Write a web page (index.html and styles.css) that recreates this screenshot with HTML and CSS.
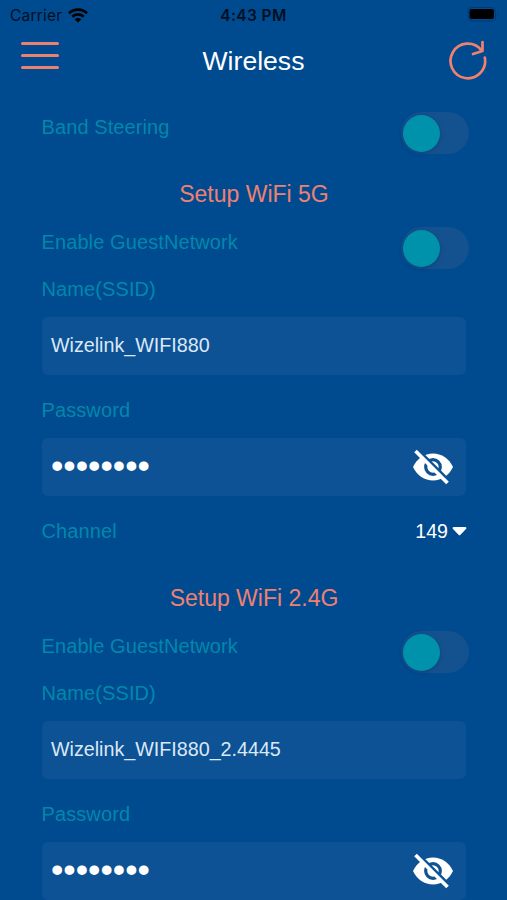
FILE: index.html
```html
<!DOCTYPE html>
<html lang="en">

<head>
    <meta charset="UTF-8">
    <title>Wireless</title>
    <link rel="stylesheet" href="styles.css">
</head>

<body>

    <!-- Icons used more than once -->
    <svg class="sprite">
        <symbol id="eye-off" viewBox="0 0 42 36">
            <path d="M1 18C5 9.500 12.500 4.500 21 4.500S37 9.500 41 18C37 26.500 29.500 31.500 21 31.500S5 26.500 1 18Z" fill="#fff" />
            <circle cx="21" cy="18" r="7.300" fill="none" stroke="#0c5295" stroke-width="3.200" />
            <path d="M6.200 1.500L38 33" stroke="#0c5295" stroke-width="3.600" />
            <path d="M3.500 2L35.500 34" stroke="#fff" stroke-width="3.800" />
        </symbol>
    </svg>

    <div class="status-bar">
        <div class="carrier">
            <span>Carrier</span>
            <svg width="20" height="15" viewBox="0 0 20 15" fill="none" stroke="#000" stroke-width="2.600">
                <path d="M1 5.200C6 .4 14 .4 19 5.200" />
                <path d="M4.200 8.700C7.500 5.600 12.500 5.600 15.800 8.700" />
                <path d="M10 14.500L6.700 11.200C8.600 9.500 11.400 9.500 13.300 11.200Z" fill="#000" stroke="none" />
            </svg>
        </div>
        <div class="time">4:43 PM</div>
        <div class="battery">
            <svg width="34" height="16" viewBox="0 0 34 16">
                <rect x="1" y="0.500" width="27.500" height="13.500" rx="4" fill="none" stroke="#003b77" stroke-width="1" />
                <rect x="2.500" y="2" width="24.500" height="10" rx="2" fill="#000" />
                <path d="M30.500 5Q32.500 7.200 30.500 9.500Z" fill="#003b77" />
            </svg>
        </div>
    </div>

    <div class="header">
        <div class="menu">
            <span></span>
            <span></span>
            <span></span>
        </div>
        <h1>Wireless</h1>
        <svg class="refresh" width="40" height="42" viewBox="0 0 40 42" fill="none" stroke="#ef8170" stroke-width="2.700" stroke-linecap="round" stroke-linejoin="round">
            <path d="M36.800 19.600A17.300 17.300 0 1 1 33.300 12.100" />
            <path d="M34.500 4V13L25 16" />
        </svg>
    </div>

    <div class="content">
        <div class="row">
            <label>Band Steering</label>
            <div class="switch"></div>
        </div>

        <div class="section">
            <h2>Setup WiFi 5G</h2>
            <div class="row">
                <label>Enable GuestNetwork</label>
                <div class="switch"></div>
            </div>
            <label class="name-label">Name(SSID)</label>
            <div class="field">Wizelink_WIFI880</div>
            <label class="field-label">Password</label>
            <div class="field">
                <span class="dots">••••••••</span>
                <svg class="eye"><use href="#eye-off" /></svg>
            </div>
            <div class="channel">
                <label>Channel</label>
                <div class="select">149
                    <svg width="15" height="9" viewBox="0 0 15 9"><path d="M1.500 0H13.500Q15 .6 14.200 1.800L8.500 7.800Q7.500 8.800 6.500 7.800L.8 1.800Q0 .6 1.500 0Z" fill="#fff" /></svg>
                </div>
            </div>
        </div>

        <div class="section">
            <h2>Setup WiFi 2.4G</h2>
            <div class="row">
                <label>Enable GuestNetwork</label>
                <div class="switch"></div>
            </div>
            <label class="name-label">Name(SSID)</label>
            <div class="field">Wizelink_WIFI880_2.4445</div>
            <label class="field-label">Password</label>
            <div class="field">
                <span class="dots">••••••••</span>
                <svg class="eye"><use href="#eye-off" /></svg>
            </div>
        </div>
    </div>

</body>

</html>
```

FILE: styles.css
```css
* {
    box-sizing: border-box;
}

body {
    font-family: 'Liberation Sans', Arial, sans-serif;
    background-color: #004a90;
    margin: 0;
    height: 900px;
    overflow: hidden;
}

.sprite {
    display: none;
}

.status-bar {
    display: grid;
    grid-template-columns: 1fr auto 1fr;
    align-items: center;
    height: 30px;
    padding: 0 6px 0 10px;
    color: #001022;
}

.carrier {
    display: flex;
    align-items: center;
    gap: 6px;
    font-family: Inter, sans-serif;
    font-size: 15.5px;
    letter-spacing: 0.2px;
}

.time {
    font-family: Inter, sans-serif;
    font-size: 15.5px;
    font-weight: 600;
    letter-spacing: 0.4px;
    padding-right: 4px;
}

.battery {
    display: flex;
    justify-content: flex-end;
}

.header {
    display: grid;
    grid-template-columns: 60px 1fr 60px;
    height: 82px;
    padding: 8px 19px 0 21px;
}

.menu {
    display: flex;
    flex-direction: column;
    gap: 9px;
    width: 38px;
    padding-top: 3.5px;
}

.menu span {
    height: 3px;
    border-radius: 2px;
    background-color: #ea8272;
}

h1 {
    margin: 7px 2px 0 0;
    font-size: 26.6px;
    font-weight: normal;
    line-height: 32px;
    text-align: center;
    color: #fff;
}

.refresh {
    justify-self: end;
}

.content {
    padding: 0 41px 0 42px;
}

label {
    display: block;
    font-size: 20px;
    line-height: 24px;
    letter-spacing: 0.1px;
    margin-left: -0.5px;
    color: #0088aa;
}

.row {
    display: flex;
    justify-content: space-between;
    height: 48px;
}

.row label {
    padding-top: 3px;
}

.row .switch {
    margin-right: -3px;
}

.switch {
    width: 68px;
    height: 42px;
    padding: 3px 2px;
    border-radius: 21px;
    background-color: #14528f;
}

.switch::before {
    content: "";
    display: block;
    width: 37px;
    height: 37px;
    border-radius: 50%;
    background-color: #0092aa;
    box-shadow: 0 1px 4px rgba(0, 40, 90, 0.4);
}

.section {
    padding-top: 20px;
}

h2 {
    margin: 0 0 19px;
    font-size: 23px;
    font-weight: normal;
    line-height: 28px;
    text-align: center;
    color: #ee8172;
}

.name-label {
    margin: 2px 0 16px -0.5px;
}

.field {
    display: flex;
    align-items: center;
    justify-content: space-between;
    height: 58px;
    padding: 0 12px 2px 9px;
    border-radius: 6px;
    background-color: #0c5295;
    font-size: 19.7px;
    color: #dce8f6;
}

.field-label {
    margin: 23px 0 16px -0.5px;
}

.dots {
    font-size: 35.3px;
    line-height: 50px;
    color: #fff;
}

.eye {
    width: 42px;
    height: 36px;
    margin-top: 2px;
}

.channel {
    display: flex;
    align-items: center;
    justify-content: space-between;
    height: 24px;
    margin: 23px 0 21px;
}

.select {
    display: flex;
    align-items: center;
    gap: 4px;
    margin-right: -1px;
    font-size: 19.6px;
    color: #fff;
}
```
